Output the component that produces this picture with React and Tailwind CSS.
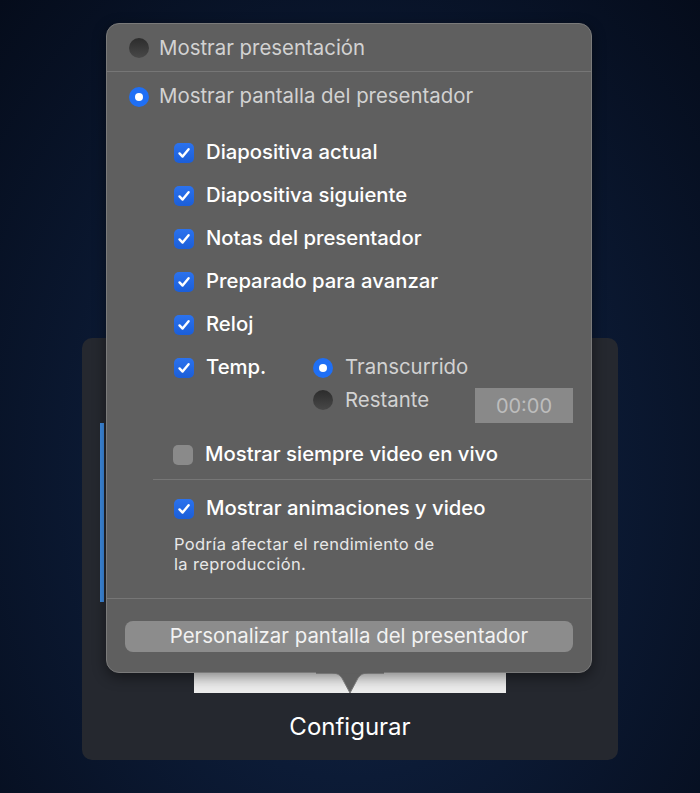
import React from 'react'

const FONT = { fontFamily: 'Inter, "Noto Sans", sans-serif' }

const Radio = ({ checked = false }) =>
  checked ? (
    <span className="flex h-[20px] w-[20px] shrink-0 items-center justify-center rounded-full bg-[#1f6ff5]">
      <span className="h-[8px] w-[8px] rounded-full bg-white" />
    </span>
  ) : (
    <span className="h-[20px] w-[20px] shrink-0 rounded-full bg-gradient-to-b from-[#2c2c2c] to-[#484848]" />
  )

const Checkbox = ({ checked = true }) =>
  checked ? (
    <span className="flex h-[20px] w-[20px] shrink-0 items-center justify-center rounded-[5px] bg-gradient-to-b from-[#2b72ee] to-[#1b5ed8]">
      <svg width="14" height="14" viewBox="0 0 14 14" fill="none">
        <path d="M2.5 7.4 L5.6 10.6 L11.6 3.2" stroke="white" strokeWidth="2.4" strokeLinecap="round" strokeLinejoin="round" />
      </svg>
    </span>
  ) : (
    <span className="h-[20px] w-[20px] shrink-0 rounded-[5px] bg-[#8a8a8a]" />
  )

const CheckRow = ({ label, checked = true }) => (
  <div className="flex h-[43px] items-center gap-x-[12px] pl-[67px]">
    <Checkbox checked={checked} />
    <span className="text-[20.3px] font-medium text-white">{label}</span>
  </div>
)

const ITEMS = ['Diapositiva actual', 'Diapositiva siguiente', 'Notas del presentador', 'Preparado para avanzar', 'Reloj']

const App = () => {
  return (
    <div
      className="min-h-[793px] w-full overflow-hidden bg-[radial-gradient(ellipse_at_50%_60%,#142a4f_0%,#0c1b36_45%,#050c1b_100%)] pt-[338px]"
      style={FONT}
    >
      <div className="relative mx-auto w-[536px]">
        {/* card behind the popover */}
        <div className="flex h-[422px] flex-col rounded-[10px] bg-[#25282f]">
          <div className="ml-[18px] mt-[85px] h-[179px] w-[4px] bg-[#3d8be0]" />
          <div className="ml-[112px] mt-[18px] h-[73px] w-[312px] bg-[#ececec]" />
          <div className="mt-[18px] text-center text-[24px] leading-[32px] text-white">Configurar</div>
        </div>

        {/* popover */}
        <div className="absolute left-[24px] top-[-315px] w-[486px]">
          <div className="relative h-[650px] rounded-[13px] border border-[#7a7a7a] bg-[#5f5f5f] shadow-[0_4px_14px_rgba(0,0,0,0.45)]">
            <div className="flex h-[47px] items-center gap-x-[10px] pl-[22px] pt-[1px]">
              <Radio />
              <span className="text-[20.4px] text-[#d2d2d2]">Mostrar presentación</span>
            </div>
            <div className="h-px bg-[#767676]" />
            <div className="flex h-[49px] items-center gap-x-[10px] pl-[22px]">
              <Radio checked />
              <span className="text-[20.4px] text-[#d2d2d2]">Mostrar pantalla del presentador</span>
            </div>

            <div className="pt-[10px]">
              {ITEMS.map((item) => (
                <CheckRow key={item} label={item} />
              ))}
              <div className="flex">
                <div className="flex h-[43px] w-[206px] shrink-0 items-center gap-x-[12px] pl-[67px]">
                  <Checkbox />
                  <span className="text-[20.3px] font-medium text-white">Temp.</span>
                </div>
                <div className="flex flex-col">
                  <div className="flex h-[43px] items-center gap-x-[12px]">
                    <Radio checked />
                    <span className="text-[20.4px] text-[#d2d2d2]">Transcurrido</span>
                  </div>
                  <div className="flex h-[22px] items-center gap-x-[12px]">
                    <Radio />
                    <span className="text-[20.4px] text-[#d2d2d2]">Restante</span>
                  </div>
                </div>
                <div className="ml-auto mr-[18px] mt-[42px] flex h-[35px] w-[98px] items-center justify-center bg-[#898989] text-[20px] text-[#bdbdbd]">
                  00:00
                </div>
              </div>
              <div className="mt-[10px] flex h-[43px] items-center gap-x-[12px] pl-[66px]">
                <Checkbox checked={false} />
                <span className="text-[20.3px] font-medium text-white">Mostrar siempre video en vivo</span>
              </div>
              <div className="ml-[46px] mt-[3px] h-px bg-[#767676]" />
              <div className="mt-[7px] flex h-[43px] items-center gap-x-[12px] pl-[67px]">
                <Checkbox />
                <span className="text-[20.3px] font-medium text-white">Mostrar animaciones y video</span>
              </div>
              <p className="mt-[4px] pl-[67px] text-[16.5px] leading-[20px] tracking-[0.35px] text-[#e8e8e8]">
                Podría afectar el rendimiento de
                <br />
                la reproducción.
              </p>
            </div>

            <div className="mt-[24px] h-px bg-[#767676]" />
            <div className="px-[18px] pt-[22px]">
              <div className="flex h-[31px] items-center justify-center rounded-[8px] bg-[#8c8c8c] text-[20.4px] text-[#f2f2f2]">
                Personalizar pantalla del presentador
              </div>
            </div>

            {/* arrow */}
            <svg className="absolute left-[209px] top-[648px]" width="68" height="24" viewBox="0 0 68 24">
              <path d="M0 1 L16 1 C22 1 25 4 27 8 L34 21 L41 8 C43 4 46 1 52 1 L68 1" fill="#5f5f5f" stroke="#7a7a7a" strokeWidth="1" />
              <rect x="0" y="0" width="68" height="1.5" fill="#5f5f5f" />
            </svg>
          </div>
        </div>
      </div>
    </div>
  )
}

export default App
